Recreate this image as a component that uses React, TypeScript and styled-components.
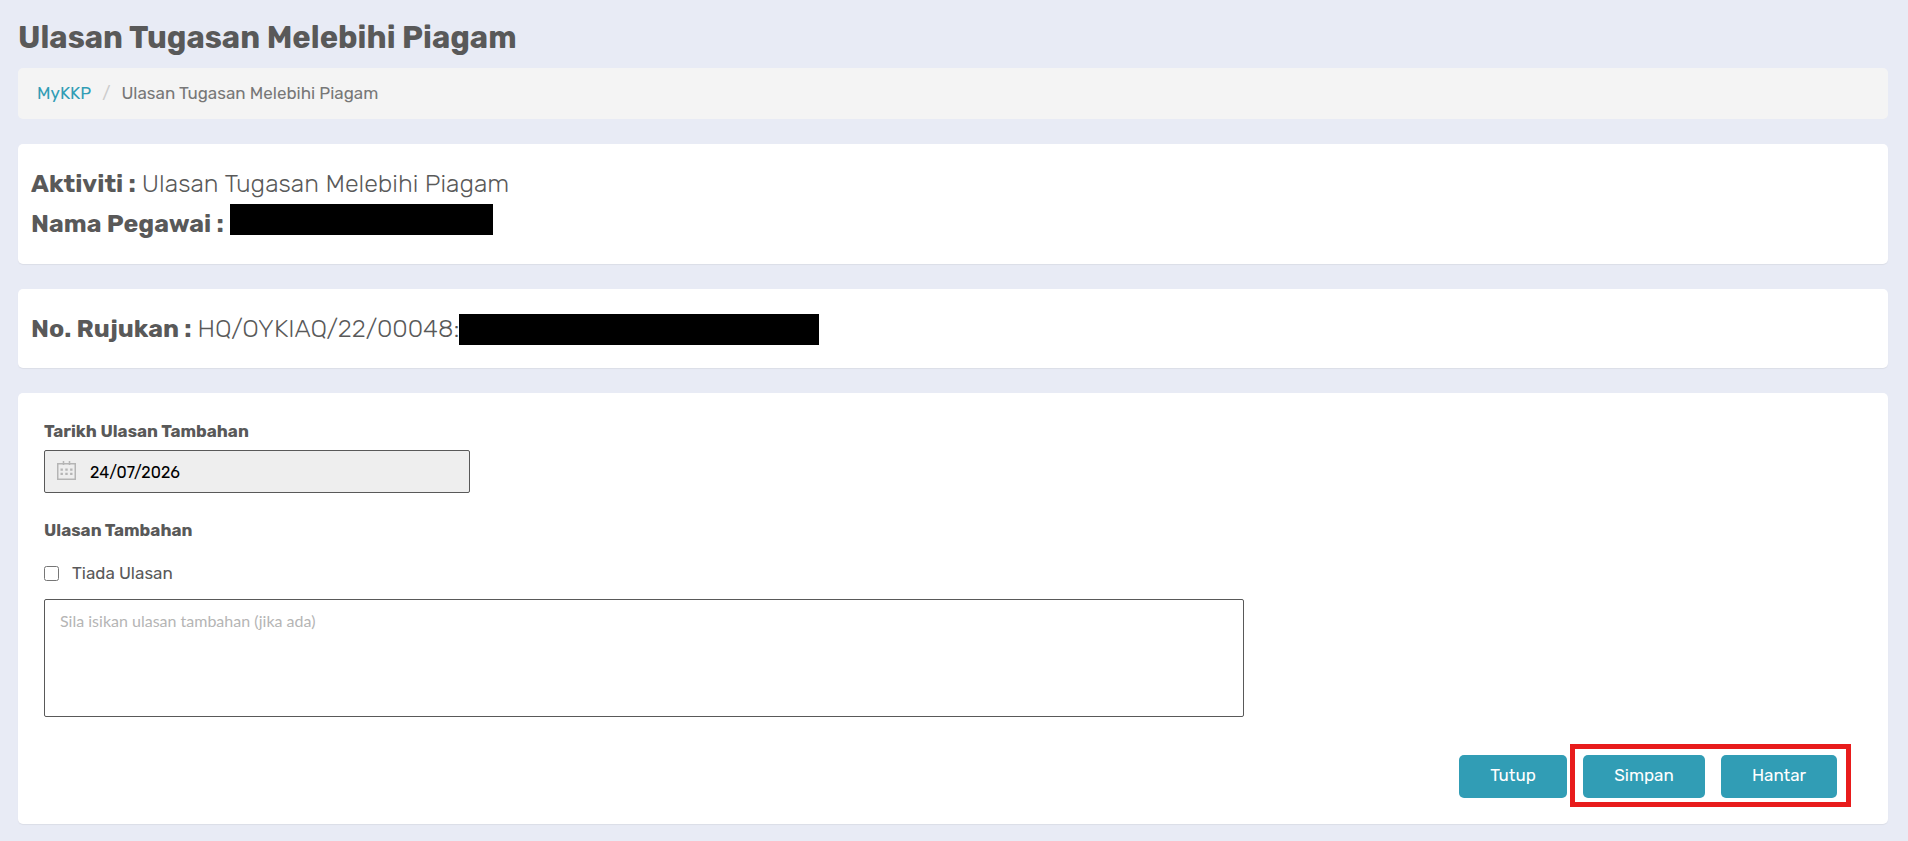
import React from 'react';
import styled, { createGlobalStyle } from 'styled-components';

const GlobalStyle = createGlobalStyle`
  *, *::before, *::after { box-sizing: border-box; }
  body {
    margin: 0;
    background: #e8ebf5;
    color: #595959;
    font-family: Rubik, Inter, sans-serif;
    font-size: 17px;
    line-height: 26px;
  }
`;

const Page = styled.main`
  display: flex;
  flex-direction: column;
  gap: 25px;
  padding: 14px 20px 17px 18px;
`;

const PageHeader = styled.header`
  display: flex;
  flex-direction: column;
  gap: 6px;
`;

const PageTitle = styled.h1`
  margin: 0;
  font-size: 31px;
  line-height: 48px;
  font-weight: 700;
`;

const Breadcrumb = styled.ol`
  display: flex;
  align-items: center;
  margin: 0;
  padding: 12px 19px 13px;
  list-style: none;
  border-radius: 5px;
  background: #f4f4f4;
`;

const Crumb = styled.li`
  color: #777;

  & + &::before {
    content: '/';
    padding: 0 11px;
    color: #ccc;
  }
`;

const CrumbLink = styled.a`
  color: #319db5;
  text-decoration: none;
`;

const Card = styled.section<{ $padding: string }>`
  padding: ${({ $padding }) => $padding};
  border-radius: 5px;
  background: #fff;
  box-shadow: 0 1px 1px rgba(0, 0, 0, 0.06);
`;

const Detail = styled.p`
  display: flex;
  flex-wrap: wrap;
  align-items: center;
  margin: 0;
  font-size: 25px;
  line-height: 40px;
  font-weight: 300;
`;

const DetailLabel = styled.strong`
  margin-right: 6px;
  font-weight: 700;
`;

const Redacted = styled.span<{ $width: number; $align?: string }>`
  align-self: ${({ $align = 'center' }) => $align};
  width: ${({ $width }) => $width}px;
  height: 31px;
  background: #000;
`;

const Form = styled.form`
  display: flex;
  flex-direction: column;
`;

const FieldLabel = styled.label`
  font-weight: 700;
`;

const DateField = styled.div`
  display: flex;
  align-items: center;
  width: 426px;
  max-width: 100%;
  height: 43px;
  margin: 6px 0 24px;
  padding: 0 12px;
  gap: 14px;
  border: 1px solid #595959;
  border-radius: 2px;
  background: #eee;
`;

const CalendarIcon = styled.svg`
  flex: none;
  margin-bottom: 3px;
`;

const DateInput = styled.input`
  flex: 1;
  min-width: 0;
  padding: 2px 0 0;
  border: 0;
  outline: 0;
  background: transparent;
  color: #000;
  font: inherit;
  font-size: 16px;
`;

const CheckLabel = styled.label`
  display: flex;
  align-items: center;
  align-self: flex-start;
  gap: 13px;
  margin: 17px 0 13px;
`;

const Checkbox = styled.input`
  width: 15px;
  height: 15px;
  margin: 0;
`;

const Comment = styled.textarea`
  width: 66%;
  height: 118px;
  padding: 9px 15px;
  border: 1px solid #595959;
  border-radius: 2px;
  resize: none;
  color: #595959;
  font-family: Lato, sans-serif;
  font-size: 16px;
  line-height: 24px;

  &::placeholder { color: #b5b5b5; opacity: 1; }
`;

const Actions = styled.div`
  display: flex;
  justify-content: flex-end;
  gap: 16px;
  margin-top: 38px;
  padding-right: 25px;
`;

const HighlightedActions = styled.div`
  position: relative;
  display: flex;
  gap: 16px;

  &::after {
    content: '';
    position: absolute;
    inset: -11px -14px -9px -13px;
    border: 5px solid #e81c1c;
    pointer-events: none;
  }
`;

const Button = styled.button<{ $width: number }>`
  width: ${({ $width }) => $width}px;
  height: 43px;
  padding: 0 0 3px;
  border: 0;
  border-radius: 5px;
  background: #319db5;
  color: #fff;
  font: inherit;
`;

export default function App() {
  return (
    <>
      <GlobalStyle />
      <Page>
        <PageHeader>
          <PageTitle>Ulasan Tugasan Melebihi Piagam</PageTitle>
          <nav aria-label="Breadcrumb">
            <Breadcrumb>
              <Crumb><CrumbLink href="#">MyKKP</CrumbLink></Crumb>
              <Crumb aria-current="page">Ulasan Tugasan Melebihi Piagam</Crumb>
            </Breadcrumb>
          </nav>
        </PageHeader>

        <Card $padding="20px 13px">
          <Detail>
            <DetailLabel>Aktiviti :</DetailLabel>
            Ulasan Tugasan Melebihi Piagam
          </Detail>
          <Detail>
            <DetailLabel>Nama Pegawai :</DetailLabel>
            <Redacted $width={263} $align="flex-start" />
          </Detail>
        </Card>

        <Card $padding="20px 13px 19px">
          <Detail>
            <DetailLabel>No. Rujukan :</DetailLabel>
            HQ/OYKIAQ/22/00048:
            <Redacted $width={360} />
          </Detail>
        </Card>

        <Card $padding="25px 26px 26px">
          <Form onSubmit={(event) => event.preventDefault()}>
            <FieldLabel htmlFor="tarikh">Tarikh Ulasan Tambahan</FieldLabel>
            <DateField>
              <CalendarIcon width="19" height="19" viewBox="0 0 19 19" fill="none" aria-hidden="true">
                <path d="M.75 2.75h17.5v15.5H.75zM6.5 0v4M12.5 0v4" stroke="#b5b5b5" strokeWidth="1.5" />
                <path
                  d="M3.5 7.5h2.4v2.2H3.5zM8.3 7.5h2.4v2.2H8.3zM13.1 7.5h2.4v2.2h-2.4zM3.5 11.8h2.4V14H3.5zM8.3 11.8h2.4V14H8.3zM13.1 11.8h2.4V14h-2.4z"
                  fill="#b5b5b5"
                />
              </CalendarIcon>
              <DateInput id="tarikh" type="text" defaultValue="24/07/2026" readOnly />
            </DateField>

            <FieldLabel htmlFor="ulasan">Ulasan Tambahan</FieldLabel>
            <CheckLabel>
              <Checkbox type="checkbox" />
              Tiada Ulasan
            </CheckLabel>
            <Comment id="ulasan" placeholder="Sila isikan ulasan tambahan (jika ada)" />

            <Actions>
              <Button type="button" $width={108}>Tutup</Button>
              <HighlightedActions>
                <Button type="button" $width={122}>Simpan</Button>
                <Button type="submit" $width={116}>Hantar</Button>
              </HighlightedActions>
            </Actions>
          </Form>
        </Card>
      </Page>
    </>
  );
}
